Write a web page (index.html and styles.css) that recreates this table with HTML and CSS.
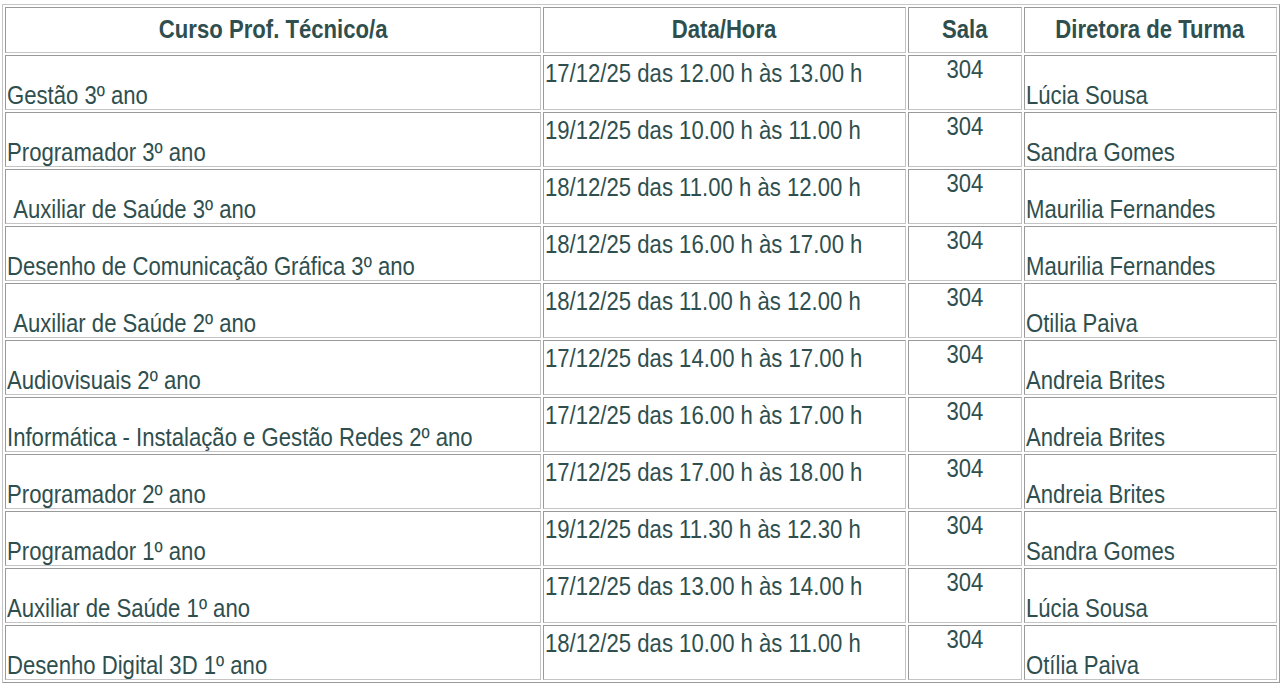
FILE: index.html
```html
<!DOCTYPE html>
<html lang="pt">
<head>
<meta charset="utf-8">
<title>Horário de atendimento</title>
<link rel="stylesheet" href="styles.css">
</head>
<body>
<table class="schedule">
  <thead>
    <tr>
      <th class="c-curso"><span class="t">Curso Prof. Técnico/a</span></th>
      <th class="c-data"><span class="t">Data/Hora</span></th>
      <th class="c-sala"><span class="t">Sala</span></th>
      <th class="c-dt"><span class="t">Diretora de Turma</span></th>
    </tr>
  </thead>
  <tbody>
    <tr><td class="curso"><span class="t">Gestão 3º ano</span></td><td class="data"><span class="t">17/12/25 das 12.00 h às 13.00 h</span></td><td class="sala"><span class="t">304</span></td><td class="dt"><span class="t">Lúcia Sousa</span></td></tr>
    <tr><td class="curso"><span class="t">Programador 3º ano</span></td><td class="data"><span class="t">19/12/25 das 10.00 h às 11.00 h</span></td><td class="sala"><span class="t">304</span></td><td class="dt"><span class="t">Sandra Gomes</span></td></tr>
    <tr><td class="curso"><span class="t">&nbsp;Auxiliar de Saúde 3º ano</span></td><td class="data"><span class="t">18/12/25 das 11.00 h às 12.00 h</span></td><td class="sala"><span class="t">304</span></td><td class="dt"><span class="t">Maurilia Fernandes</span></td></tr>
    <tr><td class="curso"><span class="t">Desenho de Comunicação Gráfica 3º ano</span></td><td class="data"><span class="t">18/12/25 das 16.00 h às 17.00 h</span></td><td class="sala"><span class="t">304</span></td><td class="dt"><span class="t">Maurilia Fernandes</span></td></tr>
    <tr><td class="curso"><span class="t">&nbsp;Auxiliar de Saúde 2º ano</span></td><td class="data"><span class="t">18/12/25 das 11.00 h às 12.00 h</span></td><td class="sala"><span class="t">304</span></td><td class="dt"><span class="t">Otilia Paiva</span></td></tr>
    <tr><td class="curso"><span class="t">Audiovisuais 2º ano</span></td><td class="data"><span class="t">17/12/25 das 14.00 h às 17.00 h</span></td><td class="sala"><span class="t">304</span></td><td class="dt"><span class="t">Andreia Brites</span></td></tr>
    <tr><td class="curso"><span class="t">Informática - Instalação e Gestão Redes 2º ano</span></td><td class="data"><span class="t">17/12/25 das 16.00 h às 17.00 h</span></td><td class="sala"><span class="t">304</span></td><td class="dt"><span class="t">Andreia Brites</span></td></tr>
    <tr><td class="curso"><span class="t">Programador 2º ano</span></td><td class="data"><span class="t">17/12/25 das 17.00 h às 18.00 h</span></td><td class="sala"><span class="t">304</span></td><td class="dt"><span class="t">Andreia Brites</span></td></tr>
    <tr><td class="curso"><span class="t">Programador 1º ano</span></td><td class="data"><span class="t">19/12/25 das 11.30 h às 12.30 h</span></td><td class="sala"><span class="t">304</span></td><td class="dt"><span class="t">Sandra Gomes</span></td></tr>
    <tr><td class="curso"><span class="t">Auxiliar de Saúde 1º ano</span></td><td class="data"><span class="t">17/12/25 das 13.00 h às 14.00 h</span></td><td class="sala"><span class="t">304</span></td><td class="dt"><span class="t">Lúcia Sousa</span></td></tr>
    <tr><td class="curso"><span class="t">Desenho Digital 3D 1º ano</span></td><td class="data"><span class="t">18/12/25 das 10.00 h às 11.00 h</span></td><td class="sala"><span class="t">304</span></td><td class="dt"><span class="t">Otília Paiva</span></td></tr>
  </tbody>
</table>
</body>
</html>
```
FILE: styles.css
```css
html, body {
  margin: 0;
  padding: 0;
  background: #ffffff;
}

body {
  font-family: "Liberation Sans", Arial, sans-serif;
  font-size: 25px;
  color: #2f4f4f;
}

.schedule {
  margin: 4px 0 0 2px;
  border: 1px solid #c4c4c4;
  border-right-color: #9a9a9a;
  border-bottom-color: #9a9a9a;
  border-spacing: 2px;
}

.schedule th,
.schedule td {
  box-sizing: border-box;
  border: 1px solid #c4c4c4;
  border-top-color: #9a9a9a;
  border-left-color: #9a9a9a;
  line-height: 25.3px;
  white-space: nowrap;
}

/* condensed rendering of the Arial-like face */
.t {
  display: inline-block;
  transform: scaleX(0.885);
  transform-origin: 0 50%;
}

.schedule th .t,
.schedule td.sala .t {
  transform-origin: 50% 50%;
}

.schedule th {
  font-weight: bold;
  text-align: center;
  vertical-align: top;
  padding: 9.2px 2px 9.5px;
}

.c-curso { width: 536px; }
.c-data  { width: 361px; }
.c-sala  { width: 114px; }
.c-dt    { width: 253px; }

.schedule td {
  text-align: left;
  vertical-align: top;
  padding: 0.7px 1px 27px;
}

.schedule td.curso,
.schedule td.dt {
  padding-top: 27.2px;
  padding-bottom: 0.5px;
}

.schedule td.data {
  padding-top: 4.9px;
  padding-bottom: 22.8px;
}

.schedule td.sala {
  text-align: center;
}
```
